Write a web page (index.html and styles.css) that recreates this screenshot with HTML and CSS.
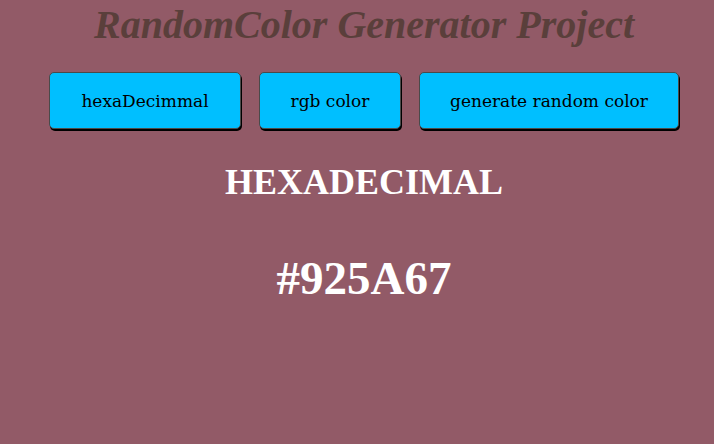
FILE: index.html
```html
<!DOCTYPE html>
<html>
<head>
<meta charset="utf-8">
<link rel="stylesheet" href="styles.css">
</head>
<body>
<div class="page">
  <h1 class="title">RandomColor Generator Project</h1>
  <div class="buttons">
    <button class="btn btn-hex">hexaDecimmal</button>
    <button class="btn btn-rgb">rgb color</button>
    <button class="btn btn-gen">generate random color</button>
  </div>
  <h2 class="mode">HEXADECIMAL</h2>
  <div class="value">#925A67</div>
</div>
</body>
</html>
```
FILE: styles.css
```css
html, body {
  margin: 0;
  padding: 0;
  background: #925A67;
  height: 100%;
}
.page {
  padding-left: 14px;
  display: flex;
  flex-direction: column;
  align-items: center;
  font-family: "Liberation Serif", serif;
}
.title {
  margin: 2px 0 0;
  font-size: 40px;
  font-style: italic;
  font-weight: bold;
  color: #5a3f3b;
  line-height: 46px;
}
.buttons {
  display: flex;
  gap: 18px;
  margin-top: 24px;
}
.btn {
  height: 57px;
  background: #00BFFF;
  border: 1px solid #4a4a4a;
  border-radius: 5px;
  box-shadow: 1px 2px 0 #000;
  font-family: "DejaVu Serif", serif;
  font-size: 17px;
  color: #000;
  padding: 0;
}
.btn-hex { width: 192px; }
.btn-rgb { width: 142px; }
.btn-gen { width: 260px; }
.mode {
  margin: 32px 0 0;
  font-size: 36px;
  font-weight: bold;
  color: #fff;
  line-height: 42px;
}
.value {
  margin-top: 48px;
  font-size: 47px;
  font-weight: bold;
  color: #fff;
  line-height: 54px;
}
```
